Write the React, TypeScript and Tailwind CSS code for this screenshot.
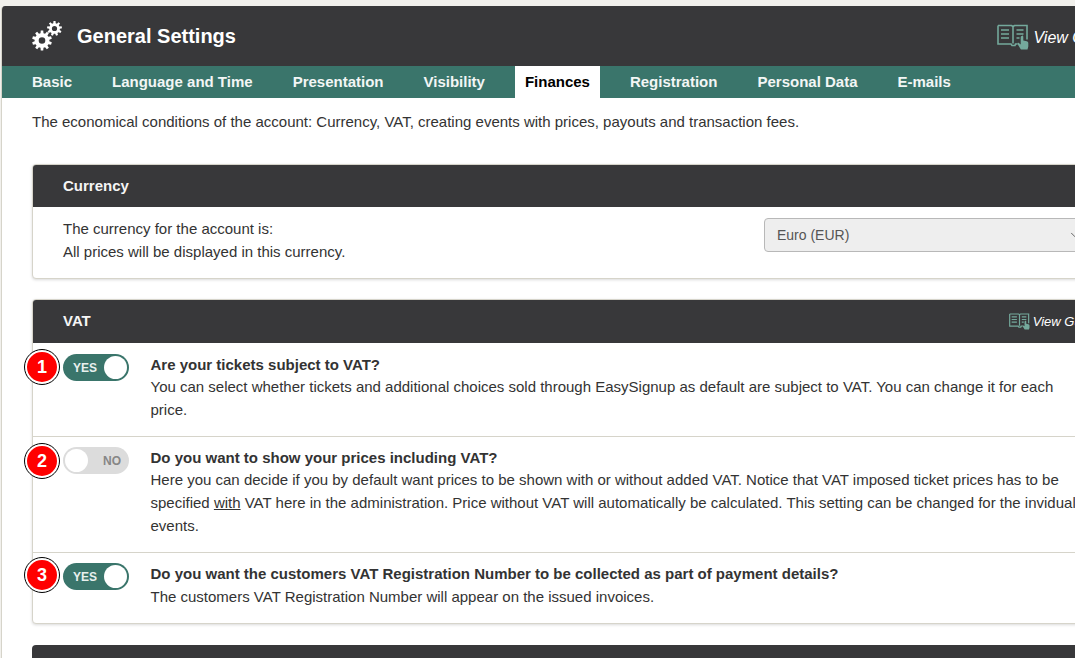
import { ChevronDown } from 'lucide-react';

function gearPath(cx: number, cy: number, outer: number, inner: number, hole: number, teeth: number) {
    let d = '';
    const step = (Math.PI * 2) / teeth;
    for (let i = 0; i < teeth; i++) {
        const a = i * step;
        const pts = [
            [inner, a - step * 0.32],
            [outer, a - step * 0.2],
            [outer, a + step * 0.2],
            [inner, a + step * 0.32],
        ];
        pts.forEach(([r, t], j) => {
            const x = (cx + r * Math.sin(t)).toFixed(2);
            const y = (cy - r * Math.cos(t)).toFixed(2);
            d += `${i === 0 && j === 0 ? 'M' : 'L'}${x} ${y} `;
        });
    }
    d += 'Z ';
    d += `M${cx - hole} ${cy} a${hole} ${hole} 0 1 0 ${hole * 2} 0 a${hole} ${hole} 0 1 0 ${-hole * 2} 0 Z`;
    return d;
}

function Gears() {
    return (
        <svg width="30" height="30" viewBox="0 0 30 30" className="shrink-0">
            <path fillRule="evenodd" fill="#fff" d={gearPath(10, 19.5, 10, 7.4, 3.3, 10)} />
            <path fillRule="evenodd" fill="#fff" d={gearPath(22.5, 7.5, 7.5, 5.4, 2.6, 9)} />
        </svg>
    );
}

function GuideIcon({ size }: { size: 'lg' | 'sm' }) {
    return (
        <svg
            viewBox="0 0 32 26"
            fill="none"
            stroke="#74a99c"
            strokeWidth={size === 'lg' ? 1.6 : 1.8}
            className={size === 'lg' ? 'w-[32px] h-[26px] shrink-0' : 'w-[21px] h-[17px] shrink-0'}
        >
            <path d="M1 1.5h13.5l1.5 1 1.5-1H30v14M1 1.5v18.5h13l1 1.5h3l.5-1.5h2M16 2.5v17" />
            <path d="M4 6h8M4 10h8M4 14h8M19.5 6h7M19.5 10h7M19.5 14h3" strokeWidth="1.7" />
            <path
                d="M25 11.5c.9 0 1.3.6 1.3 1.3v3.7l3.4.7c1 .2 1.6.9 1.6 1.9v3.3l-.8 3h-6.6l-3.4-5.4c-.4-.8.5-1.6 1.3-1l1.9 1.4v-7c0-.7.5-1.3 1.3-1.3z"
                fill="#74a99c"
                stroke="none"
            />
        </svg>
    );
}

function Toggle({ on }: { on: boolean }) {
    return on ? (
        <div className="w-[66px] h-[27px] rounded-full bg-[#3a756b] flex items-center justify-between pl-[10px] pr-[2px]">
            <span className="text-[12px] font-bold text-[#e8f0ee] pt-[1px]">YES</span>
            <span className="w-[23px] h-[23px] rounded-full bg-white"></span>
        </div>
    ) : (
        <div className="w-[66px] h-[27px] rounded-full bg-[#dcdcdc] flex items-center justify-between pl-[2px] pr-[8px]">
            <span className="w-[23px] h-[23px] rounded-full bg-white"></span>
            <span className="text-[12px] font-bold text-[#868686] pt-[1px]">NO</span>
        </div>
    );
}

function Badge({ n, top }: { n: number; top: string }) {
    return (
        <div className={`absolute left-[-8px] ${top} w-[34px] h-[34px] rounded-full bg-[#ff0000] border-[2px] border-white outline outline-[1px] outline-black flex items-center justify-center text-white font-bold text-[18px]`}>
            {n}
        </div>
    );
}

const tabs = ['Basic', 'Language and Time', 'Presentation', 'Visibility', 'Finances', 'Registration', 'Personal Data', 'E-mails'];

export default function App() {
    return (
        <div className="w-[1075px] h-[658px] overflow-hidden bg-[#f1f0ec] pt-[6px] pl-[1px] text-[15px] leading-[23px] text-[#333333] font-['Liberation_Sans',Arial,sans-serif]">
            <div className="w-[1160px] h-[660px] bg-white rounded-t-[4px] overflow-hidden border-l border-[#d6d4ca]">
                {/* Title bar */}
                <div className="h-[60px] bg-[#38383a] flex items-center justify-between pl-[30px] pr-[46px]">
                    <div className="flex items-center gap-[15px]">
                        <Gears />
                        <h1 className="text-[20px] font-bold text-white">General Settings</h1>
                    </div>
                    <div className="flex items-center gap-[4px] mt-[2px] text-white italic text-[16px]">
                        <GuideIcon size="lg" />
                        <span>View Guide</span>
                    </div>
                </div>

                {/* Tabs */}
                <div className="h-[32px] bg-[#3a756b] flex items-stretch pl-[20px] pb-0 gap-[20px] font-bold">
                    {tabs.map((tab) => (
                        <div
                            key={tab}
                            className={`flex items-center px-[10px] pb-[2px] ${tab === 'Finances' ? 'bg-white text-black' : 'text-[#f2f6f5]'}`}
                        >
                            {tab}
                        </div>
                    ))}
                </div>

                <div className="pl-[30px]">
                    <p className="mt-[12px] mb-[31px]">
                        The economical conditions of the account: Currency, VAT, creating events with prices, payouts and transaction fees.
                    </p>

                    {/* Currency */}
                    <section className="w-[1070px] rounded-[4px] border border-[#d6d4ca] shadow-[0_1px_3px_rgba(0,0,0,0.15)] bg-white mb-[20px]">
                        <div className="h-[42px] bg-[#38383a] rounded-t-[3px] flex items-center pl-[30px] pb-[2px] font-bold text-[#f5f5f5]">Currency</div>
                        <div className="h-[71px] flex items-start justify-between pl-[30px] pt-[10px]">
                            <div>
                                <div>The currency for the account is:</div>
                                <div>All prices will be displayed in this currency.</div>
                            </div>
                            <div className="w-[319px] h-[34px] mt-[1px] mr-[18px] rounded-[4px] border border-[#b8b8b8] bg-[#eeeeee] flex items-center justify-between pl-[12px] text-[14px] text-[#555555]">
                                <span>Euro (EUR)</span>
                                <ChevronDown size={14} strokeWidth={1.5} />
                            </div>
                        </div>
                    </section>

                    {/* VAT */}
                    <section className="w-[1070px] rounded-[4px] border border-[#d6d4ca] shadow-[0_1px_3px_rgba(0,0,0,0.15)] bg-white mb-[21px]">
                        <div className="h-[43px] bg-[#38383a] rounded-t-[3px] flex items-center justify-between pl-[30px] pr-[2px]">
                            <span className="font-bold text-[#f5f5f5] pb-[2px]">VAT</span>
                            <div className="flex items-center gap-[3px] italic text-[13px] text-white">
                                <GuideIcon size="sm" />
                                <span>View Guide</span>
                            </div>
                        </div>

                        <div className="relative flex border-b border-[#d6d4ca] h-[94px] pl-[30px] pt-[10px]">
                            <Badge n={1} top="top-[7px]" />
                            <div className="mt-[1px]">
                                <Toggle on />
                            </div>
                            <div className="ml-[21.5px] w-[939px]">
                                <div className="font-bold pt-[2px] leading-[20px]">Are your tickets subject to VAT?</div>
                                <div>You can select whether tickets and additional choices sold through EasySignup as default are subject to VAT. You can change it for each price.</div>
                            </div>
                        </div>

                        <div className="relative flex border-b border-[#d6d4ca] h-[116px] pl-[30px] pt-[10px]">
                            <Badge n={2} top="top-[7px]" />
                            <Toggle on={false} />
                            <div className="ml-[21.5px] mt-[-1px] w-[939px]">
                                <div className="font-bold pt-[2px] leading-[20px]">Do you want to show your prices including VAT?</div>
                                <div>
                                    Here you can decide if you by default want prices to be shown with or without added VAT. Notice that VAT imposed ticket prices has to be specified <u>with</u> VAT here in the administration. Price without VAT will automatically be calculated. This setting can be changed for the invidual events.
                                </div>
                            </div>
                        </div>

                        <div className="relative flex h-[70px] pl-[30px] pt-[10px]">
                            <Badge n={3} top="top-[5px]" />
                            <Toggle on />
                            <div className="ml-[21.5px] mt-[-1px] w-[939px]">
                                <div className="font-bold">Do you want the customers VAT Registration Number to be collected as part of payment details?</div>
                                <div>The customers VAT Registration Number will appear on the issued invoices.</div>
                            </div>
                        </div>
                    </section>

                    {/* Next panel, cut off by the window */}
                    <section className="w-[1070px] h-[42px] rounded-t-[4px] bg-[#38383a]"></section>
                </div>
            </div>
        </div>
    );
}
